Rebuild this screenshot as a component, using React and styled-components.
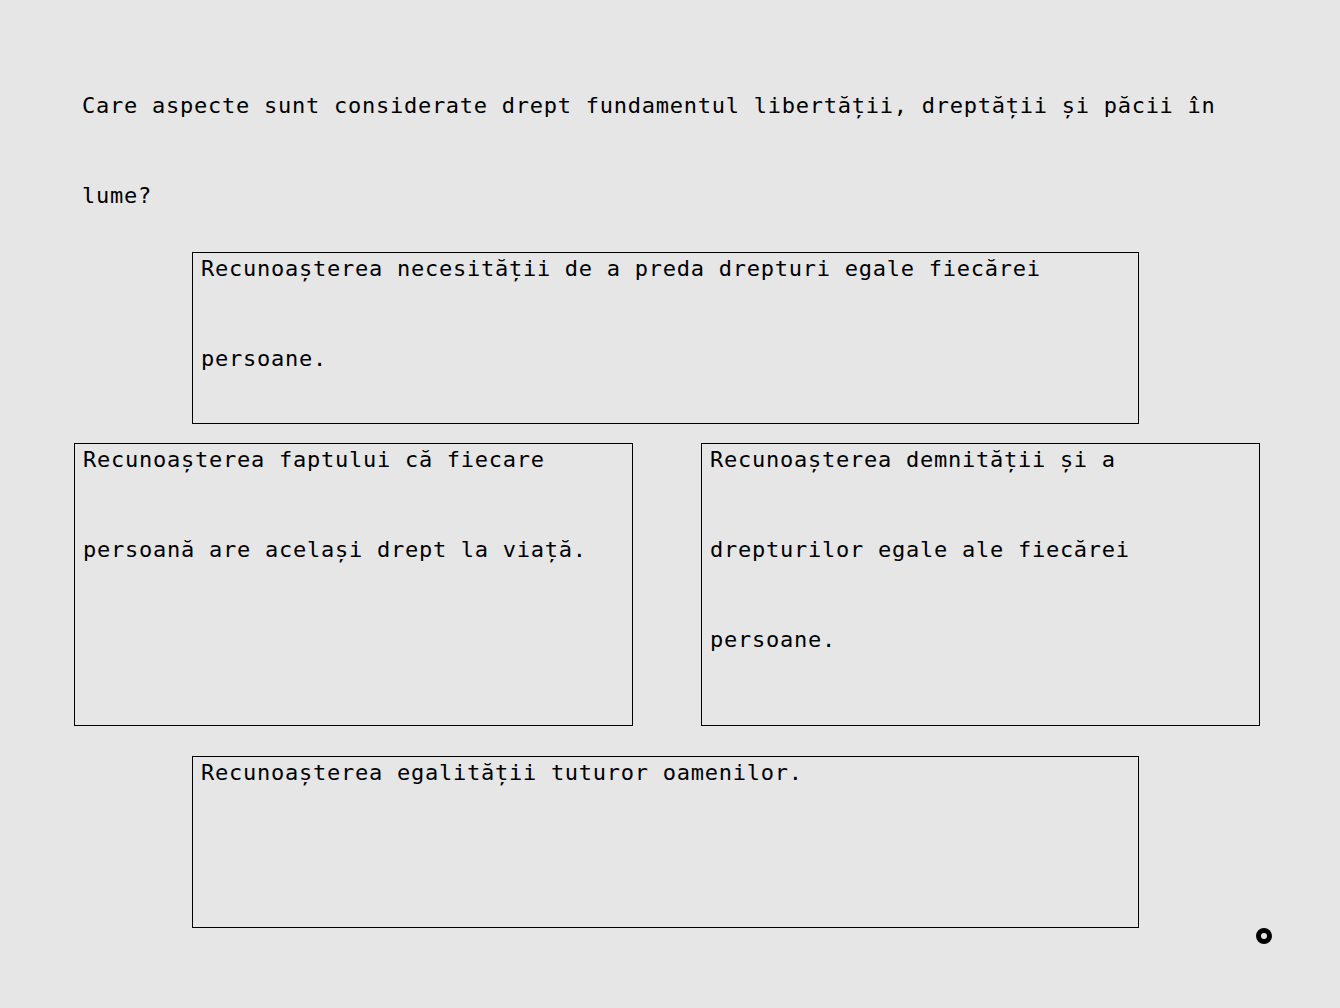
import React from "react";
import styled, { createGlobalStyle } from "styled-components";

const GlobalStyle = createGlobalStyle`
  html, body {
    margin: 0;
    padding: 0;
    background: #e6e6e6;
  }
  body {
    font-family: "DejaVu Sans Mono", "Liberation Mono", monospace;
    color: #000;
  }
`;

const Page = styled.div`
  width: 1186px;
  min-height: 1008px;
  box-sizing: border-box;
  padding: 61px 0 0;
  margin-left: 74px;
  font-size: 22px;
  letter-spacing: 0.75px;
  line-height: 90px;
`;

const Question = styled.p`
  margin: 0;
  padding: 0 8px;
  font-weight: normal;
`;

const Option = styled.div`
  box-sizing: border-box;
  border: 1px solid #000;
  padding: 0 8px;
  width: ${(p) => p.$width || 947}px;
  height: ${(p) => p.$height || 172}px;
  margin-left: ${(p) => p.$indent || 0}px;
  margin-top: ${(p) => p.$top || 0}px;
`;

const OptionText = styled.p`
  margin: -29px 0 0;
`;

const Row = styled.div`
  display: flex;
  justify-content: space-between;
  margin-top: 19px;
`;

const Ring = styled.div`
  position: absolute;
  left: 1256px;
  top: 928px;
  width: 16px;
  height: 16px;
  box-sizing: border-box;
  border: 5px solid #000;
  border-radius: 50%;
  background: #e6e6e6;
`;

export default function App() {
  return (
    <>
      <GlobalStyle />
      <Page>
        <Question>
          Care aspecte sunt considerate drept fundamentul libertății, dreptății
          și păcii în lume?
        </Question>

        <Option $indent={118} $top={11}>
          <OptionText>
            Recunoașterea necesității de a preda drepturi egale fiecărei
            persoane.
          </OptionText>
        </Option>

        <Row>
          <Option $width={559} $height={283}>
            <OptionText>
              Recunoașterea faptului că fiecare persoană are același drept la
              viață.
            </OptionText>
          </Option>
          <Option $width={559} $height={283}>
            <OptionText>
              Recunoașterea demnității și a drepturilor egale ale fiecărei
              persoane.
            </OptionText>
          </Option>
        </Row>

        <Option $indent={118} $top={30}>
          <OptionText>Recunoașterea egalității tuturor oamenilor.</OptionText>
        </Option>
      </Page>
      <Ring />
    </>
  );
}
